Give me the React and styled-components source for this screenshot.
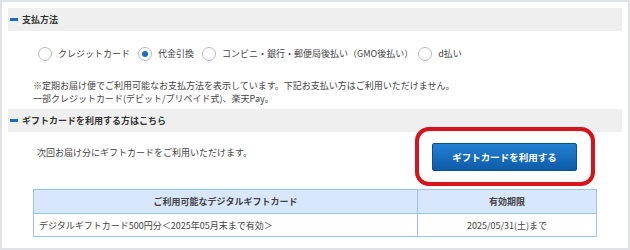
import React from "react";
import styled, { createGlobalStyle } from "styled-components";

const Global = createGlobalStyle`
  html, body { margin: 0; padding: 0; background: #fff; }
  body { font-family: "Noto Sans CJK JP", "Noto Sans", sans-serif; color: #444; }
  * { box-sizing: border-box; }
`;

const Panel = styled.div`
  width: 630px;
  height: 250px;
  border: 2px solid #dfe3e7;
  padding: 6px;
  background: #fff;
  font-size: 9px;
  line-height: 13px;
`;

const SectionHeader = styled.div`
  height: 23px;
  background: #efefef;
  display: flex;
  align-items: center;
  gap: 4px;
  padding-left: 2px;
  font-weight: bold;
  color: #333;
  margin-top: ${(p) => p.$mt || 0}px;
`;

const Dash = styled.span`
  width: 8px;
  height: 3px;
  background: #1a6ec4;
`;

const RadioRow = styled.div`
  display: flex;
  align-items: center;
  gap: 8px;
  margin-top: 16px;
  padding-left: 30px;
  height: 13px;
`;

const Option = styled.label`
  display: flex;
  align-items: center;
  gap: 6px;
  white-space: nowrap;
  margin-left: ${(p) => p.$ml || 0}px;
`;

const Radio = styled.span`
  width: 14px;
  height: 14px;
  border-radius: 50%;
  border: 1px solid #b9b9b9;
  background: #fff;
  display: flex;
  align-items: center;
  justify-content: center;
  &::after {
    content: "";
    width: 6px;
    height: 6px;
    border-radius: 50%;
    background: ${(p) => (p.$checked ? "#1a6ec4" : "transparent")};
  }
`;

const Note = styled.div`
  margin-top: 19px;
  padding-left: 25px;
`;

const GiftRow = styled.div`
  display: flex;
  justify-content: space-between;
  align-items: flex-start;
  padding: 11px 45px 0 29px;
  height: 57px;
`;

const GiftText = styled.div`
  padding-top: 3px;
`;

const ButtonWrap = styled.div`
  position: relative;
`;

const Highlight = styled.div`
  position: absolute;
  top: -16px;
  bottom: -15px;
  left: -17px;
  right: -18px;
  border: 4px solid #d6141c;
  border-radius: 14px;
  pointer-events: none;
`;

const GiftButton = styled.button`
  width: 145px;
  height: 28px;
  border: 1px solid #0b4f93;
  border-radius: 2px;
  background: linear-gradient(#2381d3, #0d5ba8);
  color: #fff;
  font-family: inherit;
  font-size: 9.5px;
  font-weight: bold;
  padding: 0;
`;

const Table = styled.table`
  margin: 0 25px;
  width: calc(100% - 50px);
  border-collapse: collapse;
  color: #444;
`;

const Th = styled.th`
  height: 24px;
  background: #d8e7fb;
  border: 1px solid #9cc2ee;
  font-weight: bold;
  text-align: center;
  padding: 0;
  width: ${(p) => p.$w || "auto"};
`;

const Td = styled.td`
  height: 23px;
  border: 1px solid #9cc2ee;
  padding: 0 5px;
  text-align: ${(p) => p.$align || "left"};
`;

export default function App() {
  return (
    <>
      <Global />
      <Panel>
        <SectionHeader>
          <Dash />
          支払方法
        </SectionHeader>
        <RadioRow>
          <Option>
            <Radio />
            クレジットカード
          </Option>
          <Option>
            <Radio $checked />
            代金引換
          </Option>
          <Option>
            <Radio />
            コンビニ・銀行・郵便局後払い（GMO後払い）
          </Option>
          <Option $ml={-3}>
            <Radio />
            d払い
          </Option>
        </RadioRow>
        <Note>
          ※定期お届け便でご利用可能なお支払方法を表示しています。下記お支払い方はご利用いただけません。
          <br />
          一部クレジットカード(デビット/プリペイド式)、楽天Pay。
        </Note>
        <SectionHeader $mt={4}>
          <Dash />
          ギフトカードを利用する方はこちら
        </SectionHeader>
        <GiftRow>
          <GiftText>次回お届け分にギフトカードをご利用いただけます。</GiftText>
          <ButtonWrap>
            <GiftButton>ギフトカードを利用する</GiftButton>
            <Highlight />
          </ButtonWrap>
        </GiftRow>
        <Table>
          <thead>
            <tr>
              <Th>ご利用可能なデジタルギフトカード</Th>
              <Th $w="179px">有効期限</Th>
            </tr>
          </thead>
          <tbody>
            <tr>
              <Td>デジタルギフトカード500円分＜2025年05月末まで有効＞</Td>
              <Td $align="center">2025/05/31(土)まで</Td>
            </tr>
          </tbody>
        </Table>
      </Panel>
    </>
  );
}
